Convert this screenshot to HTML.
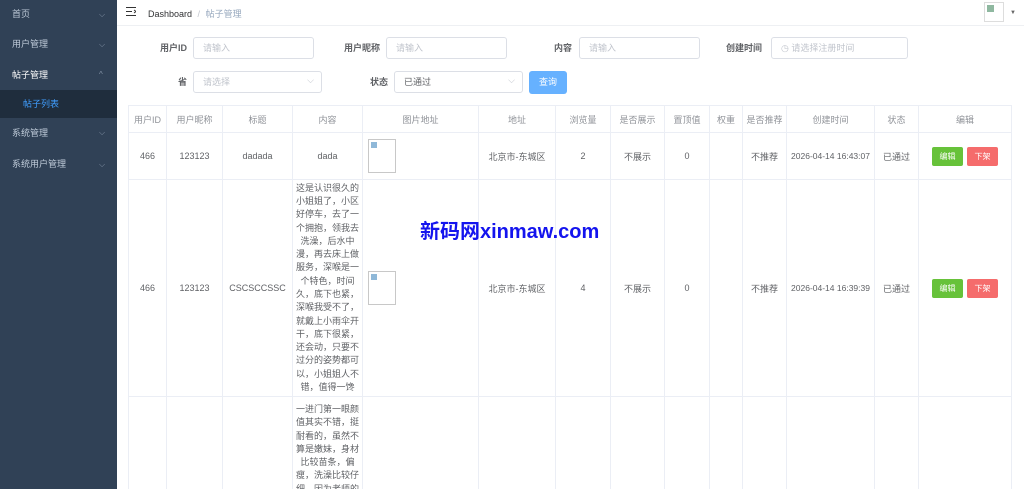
<!DOCTYPE html>
<html><head><meta charset="utf-8"><style>
*{box-sizing:border-box;margin:0;padding:0}
html,body{width:1024px;height:489px;overflow:hidden}
body{font-family:"Liberation Sans","Noto Sans CJK SC",sans-serif;font-size:12px;color:#606266;background:#fff;position:relative}
.side{position:absolute;left:0;top:0;width:117px;height:489px;background:#304156}
.mi{position:absolute;left:0;width:117px;color:#bfcbd9;font-size:9px;padding-left:12px}
.mi .ar{position:absolute;left:99px;top:0;font-size:8px;color:#8391a5}
.sub{position:absolute;left:0;top:90px;width:117px;height:28px;background:#1f2d3d;color:#409eff;font-size:9px;padding-left:23px;line-height:28px}
.hdr{position:absolute;left:117px;top:0;right:0;height:26px;border-bottom:1px solid #eef0f3}
.lbl{position:absolute;font-size:9px;font-weight:bold;color:#606266;text-align:right;line-height:22px}
.inp{position:absolute;height:22px;border:1px solid #dcdfe6;border-radius:3px;font-size:9px;color:#c0c4cc;padding-left:9px;line-height:20px}
.sel:after{content:"⌵";position:absolute;right:7px;top:-2px;color:#c0c4cc;font-size:9px}
table{position:absolute;left:128px;top:105px;border-collapse:collapse;table-layout:fixed;width:883px}
td,th{border:1px solid #ebeef5;text-align:center;font-size:9px;font-weight:normal;color:#606266;vertical-align:middle;overflow:hidden;white-space:nowrap}
th{height:27px;color:#909399}
.ct{padding:0}
.ct div{line-height:13.3px;font-size:9px;overflow:hidden}
.img{width:28px;height:34px;border:1px solid #c8c8c8;margin-left:5px;position:relative}
.img:before{content:"";position:absolute;left:2px;top:2px;width:6px;height:6px;background:#8fb8d8}
.btn{display:inline-block;width:31px;height:19px;line-height:19px;color:#fff;font-size:8px;border-radius:2px;margin:0 2px}
</style></head><body>
<div class="side">
<div class="mi" style="top:0;height:29px;line-height:29px">首页<span class="ar">⌵</span></div>
<div class="mi" style="top:29px;height:31px;line-height:31px">用户管理<span class="ar">⌵</span></div>
<div class="mi" style="top:60px;height:30px;line-height:30px;color:#fff">帖子管理<span class="ar">^</span></div>
<div class="sub">帖子列表</div>
<div class="mi" style="top:118px;height:30px;line-height:30px">系统管理<span class="ar">⌵</span></div>
<div class="mi" style="top:148px;height:33px;line-height:33px">系统用户管理<span class="ar">⌵</span></div>
</div>
<div class="hdr">
<svg style="position:absolute;left:9px;top:7px" width="10" height="9"><path d="M0 .5h10M0 4.5h6M0 8.5h10M8 3l2 1.5-2 1.5" stroke="#333" fill="none"/></svg>
<span style="position:absolute;left:31px;top:7px;font-size:9px;color:#303133">Dashboard <span style="color:#c0c4cc;margin:0 3px">/</span> <span style="color:#97a8be">帖子管理</span></span>
<div style="position:absolute;left:867px;top:2px;width:20px;height:20px;border:1px solid #ddd"><div style="margin:2px;width:7px;height:7px;background:#8fb8a0"></div></div>
<span style="position:absolute;left:893px;top:10px;font-size:6px;color:#666">▼</span>
</div>
<div class="lbl" style="left:140px;top:37px;width:47px">用户ID</div>
<div class="inp" style="left:193px;top:37px;width:121px">请输入</div>
<div class="lbl" style="left:330px;top:37px;width:50px">用户昵称</div>
<div class="inp" style="left:386px;top:37px;width:121px">请输入</div>
<div class="lbl" style="left:530px;top:37px;width:42px">内容</div>
<div class="inp" style="left:579px;top:37px;width:121px">请输入</div>
<div class="lbl" style="left:710px;top:37px;width:52px">创建时间</div>
<div class="inp" style="left:771px;top:37px;width:137px">◷ 请选择注册时间</div>
<div class="lbl" style="left:140px;top:71px;width:47px">省</div>
<div class="inp sel" style="left:193px;top:71px;width:129px">请选择</div>
<div class="lbl" style="left:340px;top:71px;width:48px">状态</div>
<div class="inp sel" style="left:394px;top:71px;width:129px;color:#606266">已通过</div>
<div style="position:absolute;left:529px;top:71px;width:38px;height:23px;background:#66b1ff;border-radius:3px;color:#fff;font-size:9px;text-align:center;line-height:23px">查询</div>
<table>
<colgroup><col style="width:38px"><col style="width:56px"><col style="width:70px"><col style="width:70px"><col style="width:116px"><col style="width:77px"><col style="width:55px"><col style="width:54px"><col style="width:45px"><col style="width:33px"><col style="width:44px"><col style="width:88px"><col style="width:44px"><col style="width:93px"></colgroup>
<tr><th>用户ID</th><th>用户昵称</th><th>标题</th><th>内容</th><th>图片地址</th><th>地址</th><th>浏览量</th><th>是否展示</th><th>置顶值</th><th>权重</th><th>是否推荐</th><th>创建时间</th><th>状态</th><th>编辑</th></tr>
<tr style="height:47px"><td>466</td><td>123123</td><td>dadada</td><td>dada</td><td style="text-align:left"><div class="img"></div></td><td>北京市-东城区</td><td>2</td><td>不展示</td><td>0</td><td></td><td>不推荐</td><td style="font-size:8.5px">2026-04-14 16:43:07</td><td>已通过</td><td><span class="btn" style="background:#67c23a">编辑</span><span class="btn" style="background:#f56c6c">下架</span></td></tr>
<tr style="height:217px"><td>466</td><td>123123</td><td>CSCSCCSSC</td><td class="ct"><div>这是认识很久的<br>小姐姐了，小区<br>好停车，去了一<br>个拥抱，领我去<br>洗澡，后水中<br>漫，再去床上做<br>服务，深喉是一<br>个特色，时间<br>久，底下也紧，<br>深喉我受不了，<br>就戴上小雨伞开<br>干，底下很紧，<br>还会动，只要不<br>过分的姿势都可<br>以，小姐姐人不<br>错，值得一馋</div></td><td style="text-align:left"><div class="img"></div></td><td>北京市-东城区</td><td>4</td><td>不展示</td><td>0</td><td></td><td>不推荐</td><td style="font-size:8.5px">2026-04-14 16:39:39</td><td>已通过</td><td><span class="btn" style="background:#67c23a">编辑</span><span class="btn" style="background:#f56c6c">下架</span></td></tr>
<tr style="height:100px"><td></td><td></td><td></td><td class="ct" style="vertical-align:top;padding-top:6px"><div style="height:93px">一进门第一眼颜<br>值其实不错，挺<br>耐看的，虽然不<br>算是嫩妹，身材<br>比较苗条，偏<br>瘦，洗澡比较仔<br>细，因为老师的</div></td><td></td><td></td><td></td><td></td><td></td><td></td><td></td><td></td><td></td><td></td></tr>
</table>
<div style="position:absolute;left:420px;top:215px;font-size:20px;color:#1414ee;font-weight:bold">新码网xinmaw.com</div>
</body></html>
